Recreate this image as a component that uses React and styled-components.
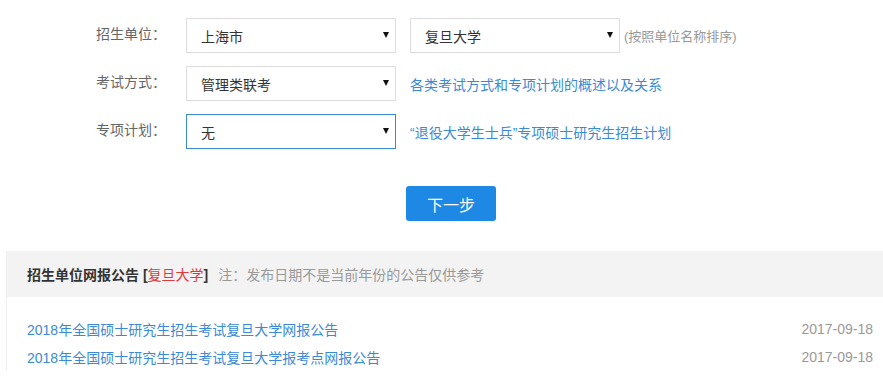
import React from "react";
import styled, { createGlobalStyle } from "styled-components";

const GlobalStyle = createGlobalStyle`
  body {
    margin: 0;
    background: #fff;
    font-family: "Liberation Sans", "Noto Sans CJK SC", sans-serif;
    font-size: 14px;
    color: #333;
    overflow: hidden;
  }
`;

const Page = styled.div`
  width: 883px;
  padding-top: 18px;
`;

const Form = styled.div`
  display: flex;
  flex-direction: column;
  gap: 13px;
  padding-left: 96px;
`;

const Row = styled.div`
  display: flex;
  align-items: center;
  height: 35px;
`;

const Label = styled.label`
  width: 90px;
  color: #666;
  font-size: 14px;
  margin-top: ${props => (props.$shift ? "-5px" : "0")};
`;

const SelectWrap = styled.div`
  position: relative;
  width: 210px;
  height: 35px;
  margin-right: ${props => props.$gap || "14px"};
`;

const Select = styled.select`
  appearance: none;
  width: 100%;
  height: 100%;
  box-sizing: border-box;
  border: 1px solid ${props => (props.$active ? "#3a8bd4" : "#dcdcdc")};
  border-radius: 0;
  background: #fff;
  padding: 3px 0 0 14px;
  font-family: inherit;
  font-size: 14px;
  color: #333;
  outline: none;
`;

const Arrow = styled.span`
  position: absolute;
  right: 7px;
  top: 14px;
  width: 0;
  height: 0;
  border-left: 3px solid transparent;
  border-right: 3px solid transparent;
  border-top: 6px solid #111;
  pointer-events: none;
`;

const Hint = styled.span`
  color: #999;
  font-size: 13px;
`;

const TextLink = styled.a`
  color: #3a8ad6;
  font-size: 14px;
  text-decoration: none;
`;

const ButtonRow = styled.div`
  padding: 37px 0 0 406px;
`;

const Button = styled.button`
  width: 90px;
  height: 35px;
  border: none;
  border-radius: 3px;
  background: #1e88e5;
  color: #fff;
  font-family: inherit;
  font-size: 16px;
  cursor: pointer;
`;

const Panel = styled.section`
  margin: 30px 0 0 6px;
  border-left: 1px solid #f0f0f0;
`;

const PanelHeader = styled.div`
  height: 46px;
  display: flex;
  align-items: center;
  padding-left: 20px;
  background: #f3f3f3;
  font-size: 14px;
`;

const Title = styled.strong`
  color: #333;
  margin-right: 10px;
`;

const Unit = styled.span`
  color: #e0383b;
  font-weight: normal;
`;

const Note = styled.span`
  color: #999;
`;

const List = styled.ul`
  list-style: none;
  margin: 0;
  padding: 18px 10px 0 20px;
`;

const Item = styled.li`
  display: flex;
  justify-content: space-between;
  align-items: center;
  height: 28px;
`;

const DateText = styled.span`
  color: #999;
`;

const notices = [
  { title: "2018年全国硕士研究生招生考试复旦大学网报公告", date: "2017-09-18" },
  { title: "2018年全国硕士研究生招生考试复旦大学报考点网报公告", date: "2017-09-18" }
];

const Dropdown = ({ value, active, gap }) => (
  <SelectWrap $gap={gap}>
    <Select $active={active} defaultValue={value}>
      <option>{value}</option>
    </Select>
    <Arrow />
  </SelectWrap>
);

const App = () => {
  return (
    <Page>
      <GlobalStyle />
      <Form>
        <Row>
          <Label $shift>招生单位：</Label>
          <Dropdown value="上海市" />
          <Dropdown value="复旦大学" gap="4px" />
          <Hint>(按照单位名称排序)</Hint>
        </Row>
        <Row>
          <Label $shift>考试方式：</Label>
          <Dropdown value="管理类联考" />
          <TextLink href="#">各类考试方式和专项计划的概述以及关系</TextLink>
        </Row>
        <Row>
          <Label $shift>专项计划：</Label>
          <Dropdown value="无" active />
          <TextLink href="#">“退役大学生士兵”专项硕士研究生招生计划</TextLink>
        </Row>
      </Form>
      <ButtonRow>
        <Button>下一步</Button>
      </ButtonRow>
      <Panel>
        <PanelHeader>
          <Title>
            招生单位网报公告 [<Unit>复旦大学</Unit>]
          </Title>
          <Note>注：发布日期不是当前年份的公告仅供参考</Note>
        </PanelHeader>
        <List>
          {notices.map(n => (
            <Item key={n.title}>
              <TextLink href="#">{n.title}</TextLink>
              <DateText>{n.date}</DateText>
            </Item>
          ))}
        </List>
      </Panel>
    </Page>
  );
};

export default App;
